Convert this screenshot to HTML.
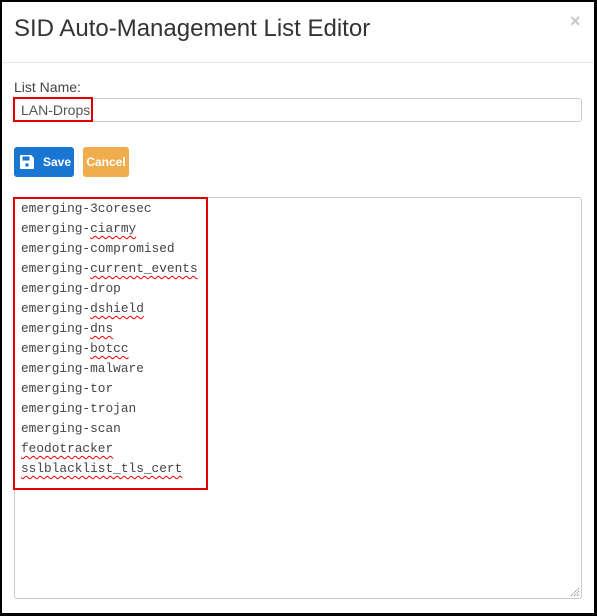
<!DOCTYPE html>
<html><head><style>
*{box-sizing:border-box;margin:0;padding:0}
body{width:597px;height:616px;background:#fff;position:relative;overflow:hidden;font-family:"Liberation Sans",sans-serif}
.frame{position:absolute;left:0;top:0;width:597px;height:616px;border:2px solid #000;border-right-width:3px;border-bottom-width:3px}
.title{position:absolute;left:14px;top:15px;font-size:24px;color:#333}
.close{position:absolute;left:570px;top:11px;font-size:18px;color:#c8c8c8;font-weight:bold}
.hr{position:absolute;left:2px;right:3px;top:62px;height:1px;background:#e5e5e5}
.label{position:absolute;left:14px;top:79px;font-size:14px;color:#444}
.input{position:absolute;left:14px;top:98px;width:568px;height:24px;border:1px solid #ccc;border-radius:3px}
.redbox{position:absolute;border:2px solid #e00000}
.lan{position:absolute;left:21px;top:102px;font-size:14px;color:#555}
.btn{position:absolute;top:147px;height:30px;border-radius:3px;color:#fff;font-size:12px;font-weight:bold;line-height:30px}
.ta{position:absolute;left:14px;top:197px;width:568px;height:402px;border:1px solid #ccc;border-radius:3px}
.code{position:absolute;left:21px;top:199px;font-family:"Liberation Mono",monospace;font-size:12.8px;line-height:20px;color:#444;white-space:pre}
.sq{text-decoration:underline wavy #e00;text-decoration-thickness:1px;text-underline-offset:3px}
</style></head><body>
<div class="frame"></div>
<div class="title">SID Auto-Management List Editor</div>
<div class="close">×</div>
<div class="hr"></div>
<div class="label">List Name:</div>
<div class="input"></div>
<div class="lan">LAN-Drops</div>
<div class="redbox" style="left:13px;top:97px;width:80px;height:25px"></div>
<div class="btn" style="left:14px;width:60px;background:#1976d2;padding-left:29px">Save
<svg style="position:absolute;left:5px;top:7px" width="16" height="16" viewBox="0 0 16 16"><path d="M1 2a1 1 0 0 1 1-1h10l3 3v10a1 1 0 0 1-1 1H2a1 1 0 0 1-1-1z" fill="#fff"/><rect x="3.5" y="2.5" width="7" height="4" fill="#1976d2"/><circle cx="8" cy="11" r="1.7" fill="#1976d2"/></svg></div>
<div class="btn" style="left:83px;width:46px;background:#f0ad4e;text-align:center">Cancel</div>
<div class="ta"></div>
<svg style="position:absolute;left:570px;top:587px" width="10" height="10"><path d="M1 9L9 1M4 9L9 4M7 9L9 7" stroke="#777" stroke-width="1" stroke-dasharray="1 1"/></svg>
<div class="code">emerging-3coresec
emerging-<span class="sq">ciarmy</span>
emerging-compromised
emerging-<span class="sq">current_events</span>
emerging-drop
emerging-<span class="sq">dshield</span>
emerging-<span class="sq">dns</span>
emerging-<span class="sq">botcc</span>
emerging-malware
emerging-tor
emerging-trojan
emerging-scan
<span class="sq">feodotracker</span>
<span class="sq">sslblacklist_tls_cert</span></div>
<div class="redbox" style="left:13px;top:197px;width:195px;height:293px"></div>
</body></html>
